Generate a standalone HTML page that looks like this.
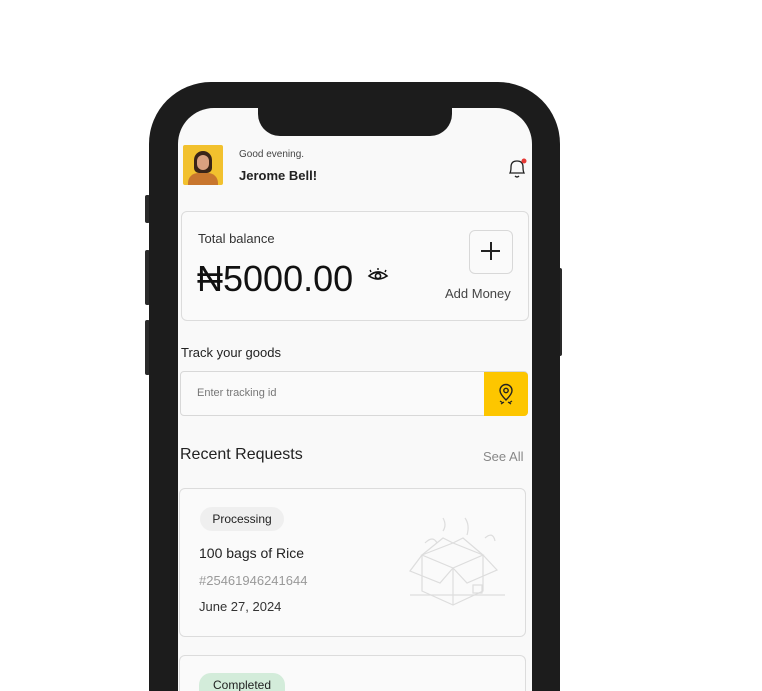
<!DOCTYPE html>
<html style="width:762px;height:691px;overflow:hidden"><head><meta charset="utf-8"><style>
*{margin:0;padding:0;box-sizing:border-box}
body{width:762px;height:691px;background:#fff;position:relative;overflow:hidden;font-family:"Liberation Sans",sans-serif;color:#1a1a1a}
.frame{position:absolute;left:149px;top:82px;width:411px;height:609px;background:#1c1c1c;border-radius:62px 62px 0 0}
.btn{position:absolute;background:#2a2a2a;border-radius:2px}
.screen{position:absolute;left:178px;top:108px;width:354px;height:583px;background:#f9f9f9;border-radius:36px 36px 0 0;overflow:hidden}
.notch{position:absolute;left:258px;top:100px;width:194px;height:36px;background:#1c1c1c;border-radius:0 0 22px 22px}
.abs{position:absolute}
.card{position:absolute;background:#fafafa;border:1px solid #dcdcdc;border-radius:6px}
</style></head><body>
<div class="btn" style="left:145px;top:195px;width:5px;height:28px"></div>
<div class="btn" style="left:145px;top:250px;width:5px;height:55px"></div>
<div class="btn" style="left:145px;top:320px;width:5px;height:55px"></div>
<div class="btn" style="left:557px;top:268px;width:5px;height:88px"></div>
<div class="frame"></div>
<div class="screen"></div>
<div class="notch"></div>

<div class="abs" style="left:183px;top:145px;width:40px;height:40px;background:#f2c12e;border-radius:2px;overflow:hidden">
 <div class="abs" style="left:11px;top:6px;width:18px;height:22px;background:#3a2418;border-radius:9px 9px 5px 5px"></div>
 <div class="abs" style="left:14px;top:10px;width:12px;height:15px;background:#d9a080;border-radius:6px"></div>
 <div class="abs" style="left:5px;top:28px;width:30px;height:12px;background:#c8762e;border-radius:10px 10px 0 0"></div>
</div>
<div class="abs" style="left:239px;top:149px;font-size:10px;color:#444">Good evening.</div>
<div class="abs" style="left:239px;top:168px;font-size:13px;font-weight:bold;color:#222">Jerome Bell!</div>
<svg class="abs" style="left:506px;top:156px" width="22" height="24" viewBox="0 0 22 24"><path d="M4 17 Q5 15 5 11 Q5 5 11 5 Q17 5 17 11 Q17 15 18 17 Z" fill="none" stroke="#222" stroke-width="1.3"/><path d="M9 20 Q11 22 13 20" fill="none" stroke="#222" stroke-width="1.3"/><circle cx="18" cy="5" r="2.5" fill="#e53935"/></svg>

<div class="card" style="left:181px;top:211px;width:348px;height:110px"></div>
<div class="abs" style="left:198px;top:231px;font-size:13px;color:#333">Total balance</div>
<div class="abs" style="left:197px;top:258px;font-size:36px;color:#111">₦5000.00</div>
<svg class="abs" style="left:367px;top:267px" width="22" height="16" viewBox="0 0 22 16"><path d="M2 9 Q11 1 20 9 Q11 15 2 9Z" fill="none" stroke="#111" stroke-width="1.6"/><circle cx="11" cy="9" r="2.6" fill="none" stroke="#111" stroke-width="1.6"/><path d="M4 5 L3 3 M11 3 V1 M18 5 L19 3" stroke="#111" stroke-width="1.4"/></svg>
<div class="abs" style="left:469px;top:230px;width:44px;height:44px;border:1px solid #d8d8d8;border-radius:6px;background:#fafafa"></div>
<div class="abs" style="left:481px;top:250px;width:19px;height:1.6px;background:#222"></div>
<div class="abs" style="left:490px;top:242px;width:1.6px;height:18px;background:#222"></div>
<div class="abs" style="left:445px;top:286px;font-size:13px;color:#444">Add Money</div>

<div class="abs" style="left:181px;top:345px;font-size:13px;color:#222">Track your goods</div>
<div class="abs" style="left:180px;top:371px;width:348px;height:45px;border:1px solid #d8d8d8;border-radius:4px;background:#fafafa"></div>
<div class="abs" style="left:484px;top:372px;width:44px;height:44px;background:#fdc600;border-radius:0 4px 4px 0"></div>
<svg class="abs" style="left:496px;top:383px" width="20" height="22" viewBox="0 0 20 22"><path d="M10 17 Q4 11 4 7.5 A6 6 0 0 1 16 7.5 Q16 11 10 17Z" fill="none" stroke="#222" stroke-width="1.4"/><circle cx="10" cy="7.5" r="2.2" fill="none" stroke="#222" stroke-width="1.4"/><path d="M4 18 L7 20 M16 18 L13 20 M5 21 L8 19 M15 21 L12 19" stroke="#222" stroke-width="1.2"/></svg>
<div class="abs" style="left:197px;top:387px;font-size:11px;color:#777">Enter tracking id</div>

<div class="abs" style="left:180px;top:446px;font-size:16px;color:#222">Recent Requests</div>
<div class="abs" style="left:483px;top:449px;font-size:13px;color:#888">See All</div>

<div class="card" style="left:179px;top:488px;width:347px;height:149px"></div>
<div class="abs" style="left:200px;top:507px;width:84px;height:24px;background:#efefef;border-radius:12px;font-size:12px;text-align:center;line-height:24px;color:#222">Processing</div>
<div class="abs" style="left:199px;top:545px;font-size:14px;color:#222">100 bags of Rice</div>
<div class="abs" style="left:199px;top:573px;font-size:13px;color:#999">#25461946241644</div>
<div class="abs" style="left:199px;top:599px;font-size:13px;color:#333">June 27, 2024</div>
<svg class="abs" style="left:405px;top:513px" width="100" height="100" viewBox="0 0 100 100" fill="none" stroke="#ddd" stroke-width="1.2"><path d="M5 82 H100"/><path d="M17 42 L48 30 L78 42 L48 55 Z"/><path d="M17 42 V78 L48 92 L78 78 V42"/><path d="M48 55 V92"/><path d="M17 42 L5 58 L35 70 L48 55"/><path d="M78 42 L92 57 L62 70 L48 55"/><path d="M17 42 L38 25 L48 30 M78 42 L58 25 L48 30"/><rect x="68" y="72" width="9" height="8"/><path d="M38 5 Q42 12 38 18 M60 5 Q65 12 62 22 M20 30 Q28 22 32 30 M80 25 Q88 18 90 28"/></svg>

<div class="card" style="left:179px;top:655px;width:347px;height:36px;border-bottom:none;border-radius:6px 6px 0 0"></div>
<div class="abs" style="left:199px;top:673px;width:86px;height:18px;background:#d3ecda;border-radius:12px 12px 0 0;font-size:12px;text-align:center;line-height:24px;color:#222;overflow:hidden">Completed</div>
</body></html>
